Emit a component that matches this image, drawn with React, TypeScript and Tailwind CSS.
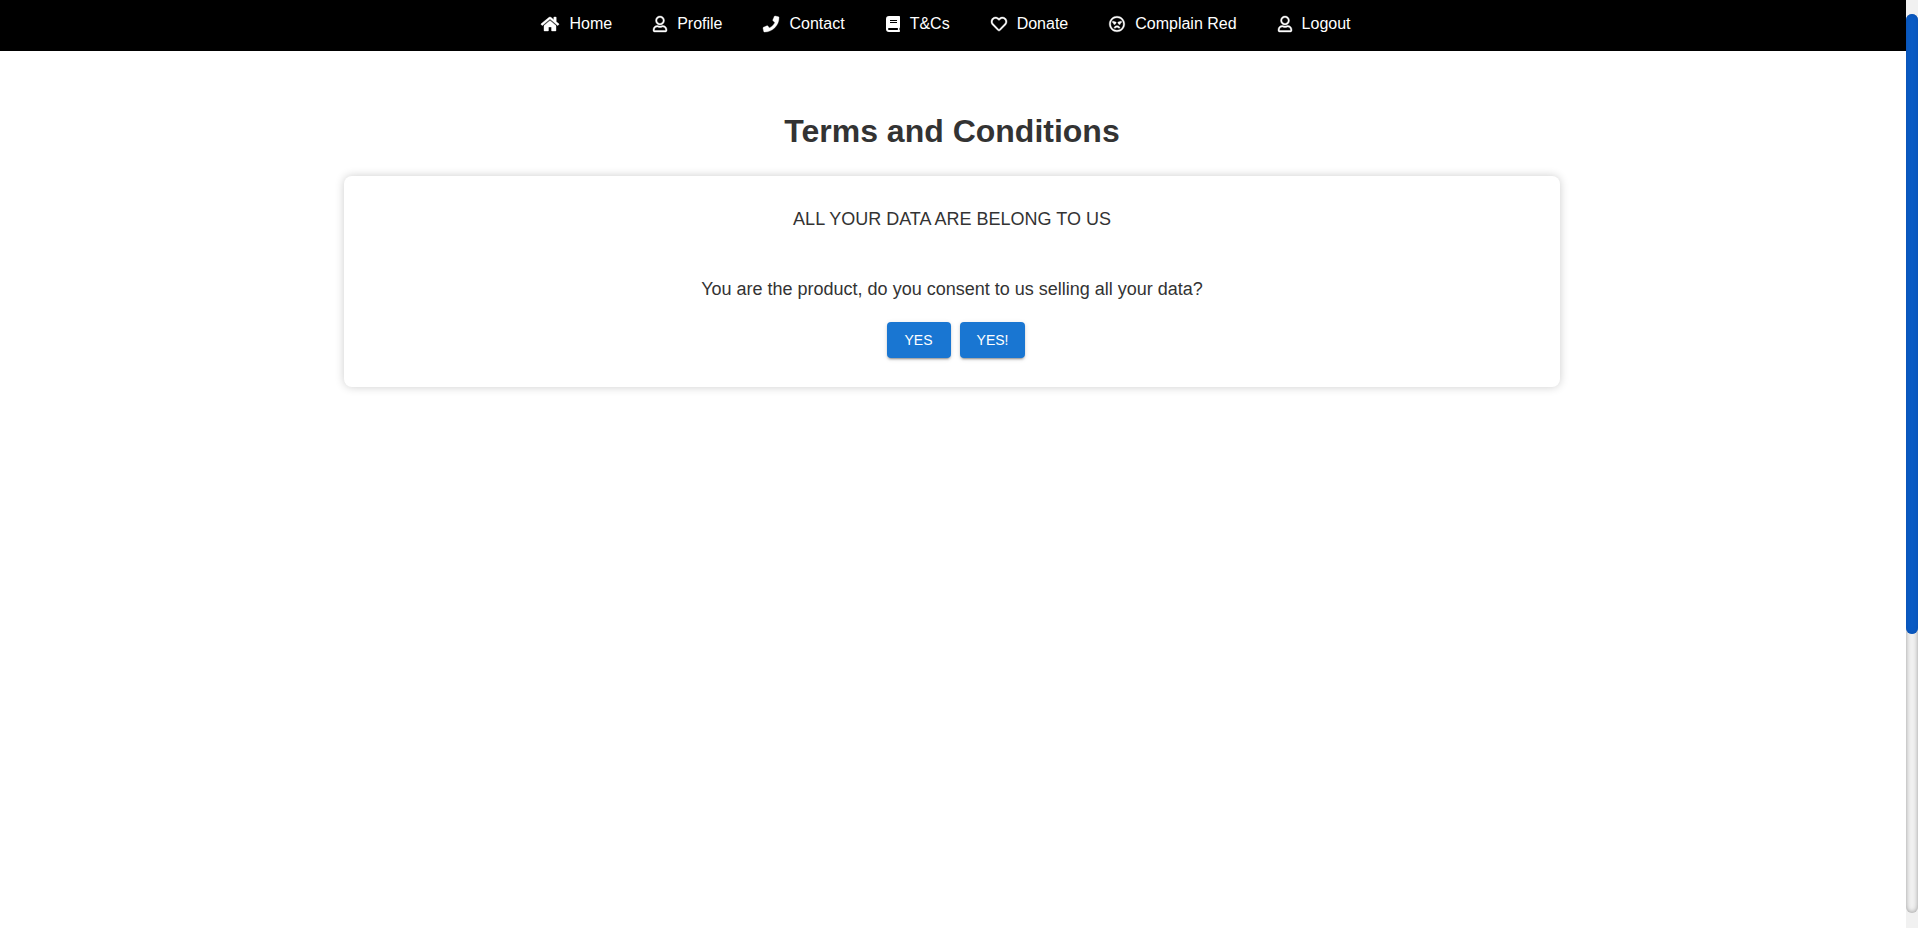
import type { ComponentType } from "react";
import {
  FaHome,
  FaPhone,
  FaRegAngry,
  FaRegHeart,
  FaRegUser,
} from "react-icons/fa";

type NavItem = {
  label: string;
  Icon: ComponentType<{ className?: string }>;
  iconClass: string;
};

function BookIcon({ className }: { className?: string }) {
  return (
    <svg viewBox="0 0 14 16" fill="currentColor" className={className}>
      <path
        fillRule="evenodd"
        d="M3 0H13.2Q14 0 14 .8V11.2Q14 11.7 13.6 12Q13.3 13 13.6 14.1Q14 14.4 14 14.8V15.2Q14 16 13.2 16H3Q0 16 0 13V3Q0 0 3 0ZM4 4V5H11V4ZM4 6V7H11V6ZM3 12Q2 12 2 13T3 14H11.9Q11.8 13 11.9 12Z"
      />
    </svg>
  );
}

const outlined = "h-4 overflow-visible stroke-current stroke-[12]";

const navItems: NavItem[] = [
  { label: "Home", Icon: FaHome, iconClass: `${outlined} w-[18px]` },
  { label: "Profile", Icon: FaRegUser, iconClass: `${outlined} w-3.5` },
  { label: "Contact", Icon: FaPhone, iconClass: `${outlined} w-4` },
  { label: "T&Cs", Icon: BookIcon, iconClass: "h-4 w-3.5" },
  { label: "Donate", Icon: FaRegHeart, iconClass: `${outlined} w-4` },
  { label: "Complain Red", Icon: FaRegAngry, iconClass: `${outlined} w-4` },
  { label: "Logout", Icon: FaRegUser, iconClass: `${outlined} w-3.5` },
];

function NavBar() {
  return (
    <nav className="bg-black pt-3 pr-3.5 pb-[15px] text-base text-white">
      <ul className="flex flex-wrap justify-center gap-x-[41px]">
        {navItems.map(({ label, Icon, iconClass }) => (
          <li key={label}>
            <a href="#" className="flex items-center gap-2.5">
              <Icon aria-hidden className={iconClass} />
              {label}
            </a>
          </li>
        ))}
      </ul>
    </nav>
  );
}

const consentButton =
  "h-9 min-w-16 rounded bg-[#1976d2] px-[17px] text-sm font-medium text-white uppercase shadow-[0_3px_1px_-2px_rgba(0,0,0,0.2),0_2px_2px_0_rgba(0,0,0,0.14),0_1px_5px_0_rgba(0,0,0,0.12)] hover:bg-[#1565c0]";

function Terms() {
  return (
    <main className="mx-auto w-full max-w-[1282px] pt-[60px] pr-[34px] pl-8 text-center text-[#333]">
      <h1 className="text-[32px] leading-10 font-bold">Terms and Conditions</h1>
      <section className="mt-[25px] rounded-lg bg-white px-8 py-[29px] text-lg shadow-[0_0_10px_rgba(0,0,0,0.2)]">
        <p>ALL YOUR DATA ARE BELONG TO US</p>
        <p className="mt-[42px]">
          You are the product, do you consent to us selling all your data?
        </p>
        <div className="mt-[19px] flex justify-center gap-[9px] pl-2">
          <button type="button" className={consentButton}>
            Yes
          </button>
          <button type="button" className={consentButton}>
            Yes!
          </button>
        </div>
      </section>
    </main>
  );
}

function ScrollRail() {
  return (
    <aside aria-hidden className="flex w-3 shrink-0 flex-col bg-[#f1f1f1] pt-3.5 pb-[15px]">
      <div className="flex-1 rounded-full bg-[#f1f1f1] shadow-[inset_0_0_5px_#999]">
        <div className="h-[69%] rounded-full bg-[#0a5bc4] shadow-[inset_0_0_4px_#0a4fae]" />
      </div>
    </aside>
  );
}

export default function App() {
  return (
    <div className="flex min-h-screen bg-white font-['Liberation_Sans',Arial,sans-serif]">
      <div className="min-w-0 flex-1">
        <NavBar />
        <Terms />
      </div>
      <ScrollRail />
    </div>
  );
}
